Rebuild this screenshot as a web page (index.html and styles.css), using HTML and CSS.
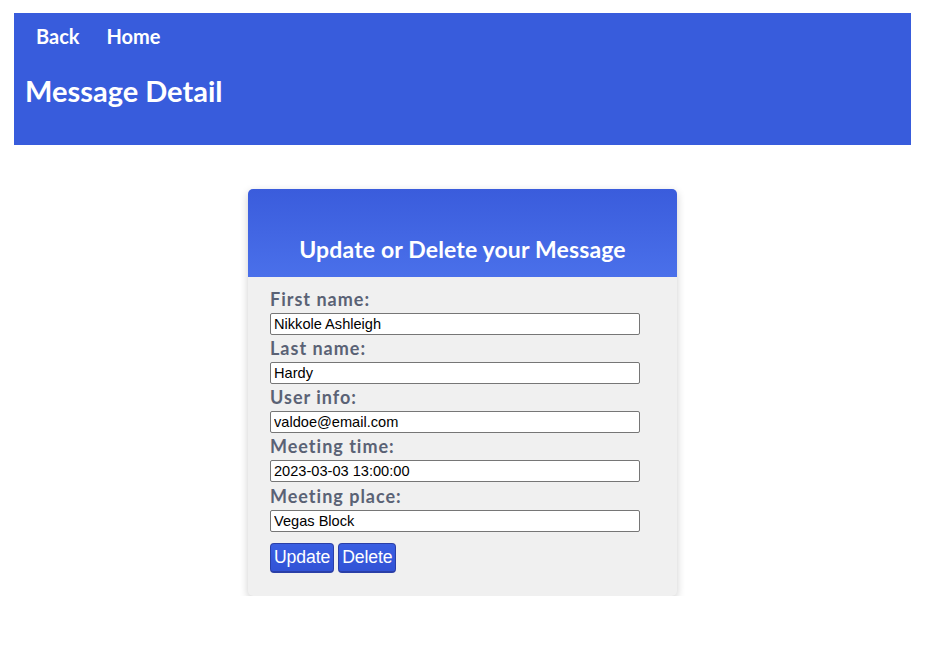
FILE: index.html
```html
<!DOCTYPE html>
<html>
<head>
<meta charset="utf-8">
<link rel="stylesheet" href="styles.css">
</head>
<body>
<div class="page">
  <header class="banner">
    <nav class="nav">
      <a class="nav-link" href="#">Back</a>
      <a class="nav-link" href="#">Home</a>
    </nav>
    <h1 class="title">Message Detail</h1>
  </header>
  <section class="card">
    <div class="card-head">
      <h2 class="card-title">Update or Delete your Message</h2>
    </div>
    <form class="card-body">
      <label class="label">First name:</label>
      <input class="field" type="text" value="Nikkole Ashleigh">
      <label class="label">Last name:</label>
      <input class="field" type="text" value="Hardy">
      <label class="label">User info:</label>
      <input class="field" type="text" value="valdoe@email.com">
      <label class="label">Meeting time:</label>
      <input class="field" type="text" value="2023-03-03 13:00:00">
      <label class="label">Meeting place:</label>
      <input class="field" type="text" value="Vegas Block">
      <div class="actions">
        <button class="btn" type="button">Update</button>
        <button class="btn" type="button">Delete</button>
      </div>
    </form>
  </section>
</div>
</body>
</html>
```
FILE: styles.css
```css
html, body {
  margin: 0;
  padding: 0;
  background: #ffffff;
}
.page {
  padding: 13px 18px 0 14px;
  font-family: "Lato", "Liberation Sans", sans-serif;
}
.banner {
  background: #385cdc;
  height: 132px;
  box-sizing: border-box;
  padding: 11px 11px 0 11px;
  color: #ffffff;
}
.nav {
  display: flex;
  gap: 27px;
  padding-left: 11px;
}
.nav-link {
  color: #ffffff;
  text-decoration: none;
  font-weight: 700;
  font-size: 20px;
  line-height: 24px;
}
.title {
  margin: 26px 0 0 0;
  font-size: 29px;
  font-weight: 700;
  line-height: 34px;
}
.card {
  width: 429px;
  margin: 44px auto 0 auto;
  border-radius: 5px;
  overflow: hidden;
  background: #f0f0f0;
  box-shadow: 0 3px 8px rgba(0,0,0,0.2);
}
.card-head {
  height: 88px;
  box-sizing: border-box;
  background: linear-gradient(#3a5cdc, #4a70ea);
  display: flex;
  align-items: flex-end;
  justify-content: center;
  padding-bottom: 14px;
}
.card-title {
  margin: 0;
  color: #ffffff;
  font-size: 23px;
  font-weight: 700;
  line-height: 28px;
  letter-spacing: 0.15px;
}
.card-body {
  display: flex;
  flex-direction: column;
  align-items: flex-start;
  padding: 9px 22px 23px 22px;
}
.label {
  color: #5a6275;
  font-size: 18px;
  font-weight: 700;
  line-height: 27px;
  letter-spacing: 1px;
}
.label:nth-of-type(5) {
  margin-top: 1px;
}
.field {
  width: 370px;
  height: 22px;
  box-sizing: border-box;
  margin: 0;
  padding: 1px 3px;
  font-family: "Liberation Sans", Arial, sans-serif;
  font-size: 14.6px;
  color: #000000;
  border: 1px solid #767676;
  border-radius: 2px;
  background: #ffffff;
}
.actions {
  display: flex;
  gap: 4px;
  margin-top: 11px;
}
.btn {
  height: 30px;
  padding: 0 3px;
  font-family: "Liberation Sans", Arial, sans-serif;
  font-size: 17.6px;
  letter-spacing: -0.1px;
  color: #ffffff;
  background: linear-gradient(#3a5fe2, #3253d6);
  border: 1px solid #2a3fa8;
  border-bottom-width: 2px;
  border-radius: 4px;
}
```
